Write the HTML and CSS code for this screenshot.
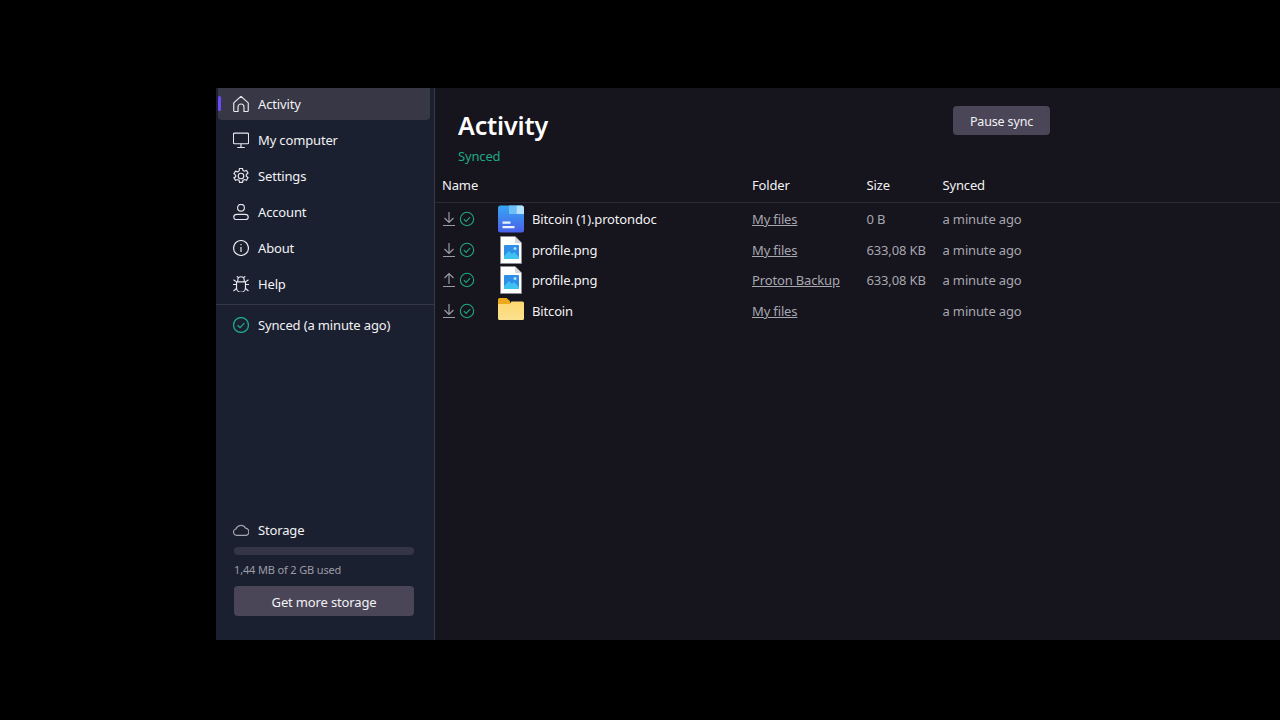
FILE: index.html
```html
<!DOCTYPE html>
<html lang="en">
<head>
  <meta charset="UTF-8">
  <title>Proton Drive - Activity</title>
  <link rel="stylesheet" href="styles.css">
</head>
<body>
  <div class="app">
    <aside class="sidebar">
      <nav class="nav">
        <a class="nav-item active">
          <svg class="nav-icon" viewBox="1.500 1.500 15 15"><path d="M2.200 8 9 1.800 15.800 8v7.200a.8.8 0 0 1-.8.8h-3.200v-4.200a2.800 2.800 0 0 0-5.600 0V16H3a.8.8 0 0 1-.8-.8z"/></svg>
          Activity
        </a>
        <a class="nav-item">
          <svg class="nav-icon" viewBox="1.500 1.500 15 15"><rect x="1.900" y="2.500" width="14.200" height="10" rx="1"/><path d="M9 12.500V16M5.500 16h7"/></svg>
          My computer
        </a>
        <a class="nav-item">
          <svg class="nav-icon" viewBox="1.500 1.500 15 15"><circle cx="9" cy="9" r="2.600"/><path d="M7.600 1.900h2.800l.4 1.800 1.400.8 2-.7 1.400 2.400-1.600 1.400v1.600l1.600 1.400-1.400 2.400-2-.7-1.400.8-.4 1.800H7.600l-.4-1.800-1.400-.8-2 .7-1.400-2.400L4 9.800V8.200L2.400 6.800l1.400-2.400 2 .7 1.400-.8z"/></svg>
          Settings
        </a>
        <a class="nav-item">
          <svg class="nav-icon" viewBox="1.500 1.500 15 15"><circle cx="9" cy="5" r="3.200"/><path d="M2.200 13.800c0-1.600 1.400-2.600 3-2.600h7.600c1.600 0 3 1 3 2.600 0 1.300-1 2.300-2.300 2.300H4.500c-1.300 0-2.300-1-2.300-2.300z"/></svg>
          Account
        </a>
        <a class="nav-item">
          <svg class="nav-icon" viewBox="1.500 1.500 15 15"><circle cx="9" cy="9" r="7"/><path d="M9 8v4.800M9 5.200v1.200"/></svg>
          About
        </a>
        <a class="nav-item">
          <svg class="nav-icon" viewBox="1.500 1.500 15 15"><path d="M4.800 7h8.400v5.500a4.200 4.200 0 0 1-8.400 0zM6 7V5.200a3 3 0 0 1 6 0V7M6.500 3 5 1.800M11.500 3 13 1.800M4.800 9.500H1.500M13.200 9.500h3.300M4.800 7 2 5M13.200 7 16 5M5 13l-3 2.500M13 13l3 2.500"/></svg>
          Help
        </a>
      </nav>
      <div class="sync-state">
        <svg class="nav-icon check" viewBox="1.500 1.500 15 15"><circle cx="9" cy="9" r="7"/><path d="m5.800 9.200 2.300 2.300 4.100-4.300"/></svg>
        Synced (a minute ago)
      </div>
      <div class="storage">
        <div class="storage-title">
          <svg class="nav-icon cloud" viewBox="1.500 1.500 15 15"><path d="M4.800 14a3 3 0 0 1-.6-5.900 5 5 0 0 1 9.100-.8 3.400 3.400 0 0 1 .4 6.700z"/></svg>
          Storage
        </div>
        <div class="storage-bar"></div>
        <div class="storage-used">1,44 MB of 2 GB used</div>
        <button class="btn storage-btn">Get more storage</button>
      </div>
    </aside>

    <main class="main">
      <header class="head">
        <div class="head-text">
          <h1>Activity</h1>
          <div class="status">Synced</div>
        </div>
        <button class="btn pause-btn">Pause sync</button>
      </header>

      <div class="row table-head">
        <div class="col-name">Name</div>
        <div class="col-folder">Folder</div>
        <div class="col-size">Size</div>
        <div class="col-synced">Synced</div>
      </div>

      <div class="row item">
        <div class="col-state">
          <svg class="arrow" viewBox="0 0 14 16"><path d="M7 1v10.500M2.500 7 7 11.500 11.500 7M1 14.500h12"/></svg>
          <svg class="check" viewBox="0 0 18 18"><circle cx="9" cy="9" r="7.500"/><path d="m5.500 9.200 2.500 2.500 4.500-4.700"/></svg>
        </div>
        <div class="col-icon">
          <svg class="file-icon" width="28" height="28" viewBox="0 0 28 28">
            <defs><linearGradient id="doc" x1="0" y1="0" x2="0" y2="1"><stop offset="0" stop-color="#37a6f5"/><stop offset="1" stop-color="#4a5fe8"/></linearGradient></defs>
            <rect x="1" y="0.500" width="26" height="27" rx="2.500" fill="url(#doc)"/>
            <path d="M12 .5h7.500V9H12z" fill="#6cc0f7"/>
            <path d="M19.500.5h5A2.500 2.500 0 0 1 27 3v6h-7.500z" fill="#b5e3fb"/>
            <path d="M5.500 16.500h8v2.200h-8zM5.500 21h12v2.200h-12z" fill="#e8f3fd"/>
          </svg>
        </div>
        <div class="col-file">Bitcoin (1).protondoc</div>
        <div class="col-folder"><a>My files</a></div>
        <div class="col-size">0 B</div>
        <div class="col-synced">a minute ago</div>
      </div>

      <div class="row item">
        <div class="col-state">
          <svg class="arrow" viewBox="0 0 14 16"><path d="M7 1v10.500M2.500 7 7 11.500 11.500 7M1 14.500h12"/></svg>
          <svg class="check" viewBox="0 0 18 18"><circle cx="9" cy="9" r="7.500"/><path d="m5.500 9.200 2.500 2.500 4.500-4.700"/></svg>
        </div>
        <div class="col-icon">
          <svg class="file-icon" width="28" height="28" viewBox="0 0 28 28">
            <path d="M3.500.5H18L24.500 7v20.500h-21z" fill="#fff" stroke="#8d8d93"/>
            <path d="M18 .5V7h6.500z" fill="#d5d5da"/>
            <rect x="7" y="9" width="15" height="14" rx="1" fill="#2f8fe8"/>
            <path d="M7 23v-3l5-5 3 3 2-2 5 5v2z" fill="#3fc1f2"/>
            <circle cx="18" cy="12.500" r="1.500" fill="#a9def8"/>
          </svg>
        </div>
        <div class="col-file">profile.png</div>
        <div class="col-folder"><a>My files</a></div>
        <div class="col-size">633,08 KB</div>
        <div class="col-synced">a minute ago</div>
      </div>

      <div class="row item">
        <div class="col-state">
          <svg class="arrow" viewBox="0 0 14 16"><path d="M7 12V1.500M2.500 6 7 1.500 11.500 6M1 14.500h12"/></svg>
          <svg class="check" viewBox="0 0 18 18"><circle cx="9" cy="9" r="7.500"/><path d="m5.500 9.200 2.500 2.500 4.500-4.700"/></svg>
        </div>
        <div class="col-icon">
          <svg class="file-icon" width="28" height="28" viewBox="0 0 28 28">
            <path d="M3.500.5H18L24.500 7v20.500h-21z" fill="#fff" stroke="#8d8d93"/>
            <path d="M18 .5V7h6.500z" fill="#d5d5da"/>
            <rect x="7" y="9" width="15" height="14" rx="1" fill="#2f8fe8"/>
            <path d="M7 23v-3l5-5 3 3 2-2 5 5v2z" fill="#3fc1f2"/>
            <circle cx="18" cy="12.500" r="1.500" fill="#a9def8"/>
          </svg>
        </div>
        <div class="col-file">profile.png</div>
        <div class="col-folder"><a>Proton Backup</a></div>
        <div class="col-size">633,08 KB</div>
        <div class="col-synced">a minute ago</div>
      </div>

      <div class="row item">
        <div class="col-state">
          <svg class="arrow" viewBox="0 0 14 16"><path d="M7 1v10.500M2.500 7 7 11.500 11.500 7M1 14.500h12"/></svg>
          <svg class="check" viewBox="0 0 18 18"><circle cx="9" cy="9" r="7.500"/><path d="m5.500 9.200 2.500 2.500 4.500-4.700"/></svg>
        </div>
        <div class="col-icon">
          <svg class="file-icon" width="28" height="28" viewBox="0 0 28 28">
            <defs><linearGradient id="folder" x1="0" y1="0" x2="0" y2="1"><stop offset="0" stop-color="#fdd871"/><stop offset="1" stop-color="#fbe08f"/></linearGradient></defs>
            <path d="M1 2.500A1.500 1.500 0 0 1 2.500 1h7l3.500 3v3H1z" fill="#eaa91c"/>
            <path d="M1 7h11.500l2-2.500h11A1.500 1.500 0 0 1 27 6v15.500a1.500 1.500 0 0 1-1.500 1.500h-23A1.500 1.500 0 0 1 1 21.500z" fill="url(#folder)"/>
          </svg>
        </div>
        <div class="col-file">Bitcoin</div>
        <div class="col-folder"><a>My files</a></div>
        <div class="col-size"></div>
        <div class="col-synced">a minute ago</div>
      </div>
    </main>
  </div>
</body>
</html>
```

FILE: styles.css
```css
* {
  box-sizing: border-box;
}
html, body {
  height: 100%;
}
body {
  margin: 0;
  padding: 88px 0 80px 216px;
  background: #000;
  color: #fff;
  font-family: "Noto Sans", "Open Sans", sans-serif;
  font-size: 13px;
  letter-spacing: -0.15px;
}
.app {
  display: flex;
  height: 552px;
  background: #16141c;
}

/* sidebar */
.sidebar {
  width: 219px;
  display: flex;
  flex-direction: column;
  background: #1b2030;
  border-right: 1px solid #3c3a48;
}
.nav {
  display: flex;
  flex-direction: column;
  gap: 4px;
  padding: 0 4px 4px 2px;
  border-bottom: 1px solid #36384a;
}
.nav-item {
  position: relative;
  display: flex;
  align-items: center;
  gap: 9px;
  height: 32px;
  padding-left: 15px;
  border-radius: 4px;
  color: #f2f2f4;
}
.nav-item.active {
  background: #373745;
  border-radius: 0 0 4px 4px;
}
.nav-item.active::before {
  content: "";
  position: absolute;
  left: 0;
  top: 8px;
  width: 3px;
  height: 15px;
  border-radius: 2px;
  background: #6d4aff;
}
.nav-icon {
  width: 16px;
  height: 16px;
  flex: none;
  fill: none;
  stroke: #e8e8ec;
  stroke-width: 1.1;
}
.sync-state {
  display: flex;
  align-items: center;
  gap: 9px;
  height: 40px;
  padding-left: 17px;
  color: #f2f2f4;
}
.check {
  fill: none;
  stroke: #1ea885;
  stroke-width: 1.2;
}
.nav-icon.check {
  stroke: #1ea885;
}
.storage {
  margin-top: auto;
  padding: 0 20px 24px 18px;
}
.storage-title {
  display: flex;
  align-items: center;
  gap: 9px;
  height: 20px;
  margin: -1px 0 0 -1px;
  color: #f2f2f4;
}
.nav-icon.cloud {
  stroke: #a7a7b0;
}
.storage-bar {
  height: 8px;
  margin-top: 7px;
  border-radius: 4px;
  background: #343645;
}
.storage-used {
  margin-top: 6px;
  height: 18px;
  line-height: 18px;
  font-size: 11px;
  color: #9c9ca6;
}
.btn {
  display: block;
  border: none;
  border-radius: 4px;
  background: #4a4658;
  color: #f2f2f4;
  font-family: inherit;
  font-size: 13px;
  letter-spacing: inherit;
  padding: 1px 0 0;
}
.storage-btn {
  width: 100%;
  height: 30px;
  margin-top: 7px;
  padding-top: 2px;
}

/* main */
.main {
  flex: 1;
  min-width: 0;
}
.head {
  display: flex;
  height: 88px;
  padding-left: 23px;
}
.head-text {
  width: 495px;
}
.head h1 {
  margin: 0;
  padding-top: 17px;
  height: 55px;
  line-height: 40px;
  font-size: 25px;
  font-weight: 600;
}
.status {
  margin-top: 3px;
  line-height: 20px;
  color: #1ea885;
}
.pause-btn {
  width: 97px;
  height: 29px;
  margin-top: 18px;
  font-size: 12.5px;
}
.row {
  display: flex;
  align-items: center;
  padding-left: 7px;
}
.table-head {
  height: 27px;
  padding-bottom: 8px;
  border-bottom: 1px solid #2a2a34;
  color: #f2f2f4;
}
.table-head .col-name {
  width: 310px;
}
.item {
  height: 30.5px;
  color: #f2f2f4;
}
.table-head + .item {
  margin-top: 1px;
}
.col-state {
  display: flex;
  align-items: center;
  gap: 3px;
  width: 55px;
}
.arrow {
  width: 14px;
  height: 16px;
  fill: none;
  stroke: #9a9aa4;
  stroke-width: 1.2;
}
.col-state .check {
  width: 16px;
  height: 16px;
}
.col-icon {
  width: 35px;
  display: flex;
}
.file-icon {
  display: block;
}
.col-file {
  width: 220px;
}
.col-folder {
  width: 114.5px;
}
.col-folder a {
  color: #a7a7b0;
  text-decoration: underline;
}
.table-head .col-folder {
  color: #f2f2f4;
}
.col-size {
  width: 76px;
}
.item .col-size, .item .col-synced {
  color: #a7a7b0;
}
```
